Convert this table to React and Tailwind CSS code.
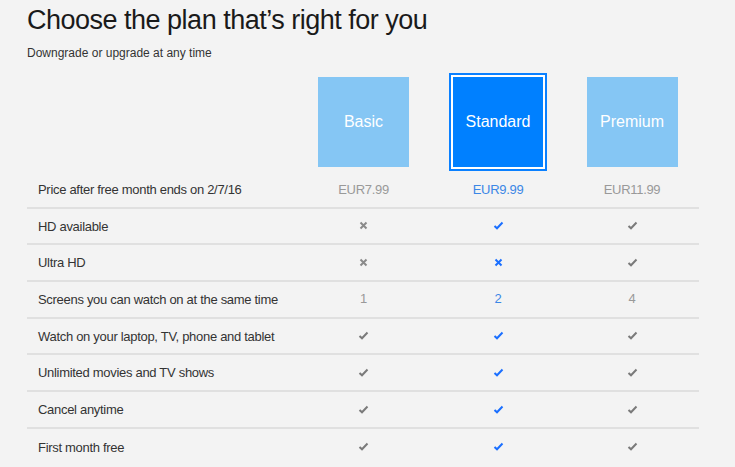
import React from 'react'

const plans = ['Basic', 'Standard', 'Premium']

const rows = [
  { label: 'HD available', vals: ['x', 'check', 'check'] },
  { label: 'Ultra HD', vals: ['x', 'x', 'check'] },
  { label: 'Screens you can watch on at the same time', vals: ['1', '2', '4'] },
  { label: 'Watch on your laptop, TV, phone and tablet', vals: ['check', 'check', 'check'] },
  { label: 'Unlimited movies and TV shows', vals: ['check', 'check', 'check'] },
  { label: 'Cancel anytime', vals: ['check', 'check', 'check'] },
  { label: 'First month free', vals: ['check', 'check', 'check'] },
]

function Check({ active }) {
  return (
    <svg width="11" height="9" viewBox="0 0 11 9" className={active ? 'text-[#1a6fff]' : 'text-[#7a7a7a]'}>
      <path d="M1.5 5 L4 7.3 L9.5 1.5" fill="none" stroke="currentColor" strokeWidth="2" />
    </svg>
  )
}

function Cross({ active }) {
  return (
    <svg width="9" height="9" viewBox="0 0 9 9" className={active ? 'text-[#1a6fff]' : 'text-[#8a8a8a]'}>
      <path d="M1.5 1.5 L7.5 7.5 M7.5 1.5 L1.5 7.5" fill="none" stroke="currentColor" strokeWidth="2" />
    </svg>
  )
}

function Cell({ value, active }) {
  if (value === 'check') return <Check active={active} />
  if (value === 'x') return <Cross active={active} />
  return <span className={active ? 'text-[#3b87e6]' : 'text-[#999]'}>{value}</span>
}

const cols = 'grid grid-cols-[269px_135px_134px_134px]'

export default function App() {
  return (
    <div className="min-h-screen bg-[#f3f3f3] font-['Liberation_Sans',Arial,sans-serif] text-[#333]">
      <div className="px-[27px] pt-[4px]">
        <h1 className="text-[27px] leading-[32px] tracking-[-0.5px] text-[#1a1a1a]">Choose the plan that’s right for you</h1>
        <p className="mt-[9px] text-[12px] leading-[16px] text-[#333]">Downgrade or upgrade at any time</p>

        <div className="mt-[12px] w-[672px]">
          <div className={`${cols} h-[98px] items-center`}>
            <div />
            {plans.map((p) => (
              <div key={p} className="flex justify-center">
                {p === 'Standard' ? (
                  <div className="w-[98px] h-[98px] border-2 border-[#0a80ff] bg-white p-[2px]">
                    <div className="flex h-full items-center justify-center bg-[#0080ff] text-[16px] text-white">{p}</div>
                  </div>
                ) : (
                  <div className="flex w-[91px] h-[90px] items-center justify-center bg-[#85c6f4] text-[16px] text-white">{p}</div>
                )}
              </div>
            ))}
          </div>

          <div className={`${cols} h-[37.5px] items-center border-b-2 border-[#e0e0e0] text-[13px] tracking-[-0.3px]`}>
            <div className="pl-[11px] pt-[1px]">Price after free month ends on 2/7/16</div>
            <div className="text-center pt-[1px] text-[#999]">EUR7.99</div>
            <div className="text-center pt-[1px] text-[#3b87e6]">EUR9.99</div>
            <div className="text-center pt-[1px] text-[#999]">EUR11.99</div>
          </div>

          {rows.map((r) => (
            <div key={r.label} className={`${cols} h-[36.7px] items-center border-b-2 border-[#e0e0e0] text-[13px] tracking-[-0.3px] last:border-b-0`}>
              <div className="pl-[11px] pt-[1px]">{r.label}</div>
              {r.vals.map((v, i) => (
                <div key={i} className="flex justify-center">
                  <Cell value={v} active={i === 1} />
                </div>
              ))}
            </div>
          ))}
        </div>
      </div>
    </div>
  )
}
